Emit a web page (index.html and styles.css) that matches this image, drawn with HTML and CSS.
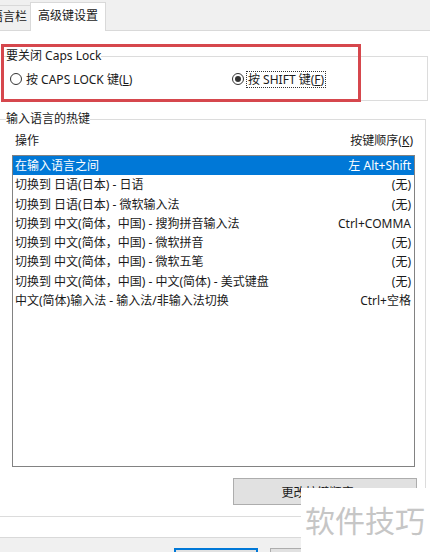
FILE: index.html
```html
<!DOCTYPE html>
<html lang="zh-CN">
<head>
  <meta charset="UTF-8" />
  <meta name="viewport" content="width=device-width, initial-scale=1.0"/>
  <title>文本服务和输入语言 - 高级键设置</title>
  <link rel="stylesheet" href="styles.css">
</head>
<body>
  <div class="tabs">
    <div class="tab tab-cut">语言栏</div>
    <div class="tab active">高级键设置</div>
  </div>

  <div class="panel">
    <fieldset class="group caps">
      <legend>要关闭 Caps Lock</legend>
      <div class="radios">
        <label class="radio"><span class="dot"></span><span>按 CAPS LOCK 键(<u>L</u>)</span></label>
        <label class="radio checked"><span class="dot"></span><span class="focus">按 SHIFT 键(<u>F</u>)</span></label>
      </div>
    </fieldset>

    <fieldset class="group hotkeys">
      <legend>输入语言的热键</legend>
      <div class="hk-body">
        <div class="hk-head">
          <span>操作</span>
          <span>按键顺序(<u>K</u>)</span>
        </div>
        <div class="list">
          <div class="row selected"><span>在输入语言之间</span><span>左 Alt+Shift</span></div>
          <div class="row"><span>切换到 日语(日本) - 日语</span><span>(无)</span></div>
          <div class="row"><span>切换到 日语(日本) - 微软输入法</span><span>(无)</span></div>
          <div class="row"><span>切换到 中文(简体，中国) - 搜狗拼音输入法</span><span>Ctrl+COMMA</span></div>
          <div class="row"><span>切换到 中文(简体，中国) - 微软拼音</span><span>(无)</span></div>
          <div class="row"><span>切换到 中文(简体，中国) - 微软五笔</span><span>(无)</span></div>
          <div class="row"><span>切换到 中文(简体，中国) - 中文(简体) - 美式键盘</span><span>(无)</span></div>
          <div class="row"><span>中文(简体)输入法 - 输入法/非输入法切换</span><span>Ctrl+空格</span></div>
        </div>
        <div class="actions">
          <button class="btn">更改按键顺序(<u>C</u>)</button>
        </div>
      </div>
    </fieldset>
  </div>

  <div class="footer">
    <button class="btn default">确定</button>
    <button class="btn">取消</button>
  </div>

  <!-- annotation + watermark from the screenshot -->
  <div class="highlight"></div>
  <div class="watermark">软件技巧</div>
</body>
</html>
```

FILE: styles.css
```css
body {
  margin: 0;
  width: 430px;
  height: 552px;
  overflow: hidden;
  position: relative;
  background: #f0f0f0;
  color: #1a1a1a;
  font-family: "Noto Sans", "Noto Sans CJK SC", sans-serif;
  font-size: 12px;
}

u { text-decoration: underline; text-underline-offset: 1px; }

/* tab strip */
.tabs {
  height: 30px;
  display: flex;
  align-items: flex-end;
}
.tab {
  box-sizing: border-box;
  height: 25px;
  line-height: 22px;
  padding: 0 7px;
  border: 1px solid #d9d9d9;
  border-bottom: none;
  background: #f0f0f0;
  white-space: nowrap;
  overflow: hidden;
}
.tab-cut {
  margin-left: -17px;
  width: 48px;
}
.tab.active {
  height: 29px;
  line-height: 26px;
  width: 76px;
  margin-left: -1px;
  margin-bottom: -1px;
  background: #fff;
  position: relative;
  z-index: 1;
}

/* white page */
.panel {
  background: #fff;
  border-top: 1px solid #d9d9d9;
  border-bottom: 1px solid #d9d9d9;
  padding: 17px 0 20px;
}

.group {
  margin: 0;
  padding: 0;
  border: 1px solid #dcdcdc;
  min-width: 0;
}
.group legend {
  padding: 0;
  line-height: 16px;
}

.caps {
  margin: 0 2px 0 3px;
  padding: 0 0 6px 2px;
}
.radios {
  height: 30px;
  display: grid;
  grid-template-columns: 222px 1fr;
  align-items: center;
  padding-left: 4px;
}
.radio {
  display: flex;
  align-items: center;
  gap: 4px;
}
.dot {
  width: 12px;
  height: 12px;
  box-sizing: border-box;
  border: 1px solid #333;
  border-radius: 50%;
  display: flex;
  align-items: center;
  justify-content: center;
}
.checked .dot::after {
  content: "";
  width: 6px;
  height: 6px;
  border-radius: 50%;
  background: #333;
}
.focus {
  outline: 1px dotted #333;
  outline-offset: 0;
  line-height: 15px;
  padding: 0 1px;
  margin-left: -1px;
}

.hotkeys {
  margin: 10px 4px 0 -2px;
}
.hotkeys legend {
  margin-left: 7px;
}
.hk-body {
  padding: 0 10px 11px 13px;
}
.hk-head {
  display: flex;
  justify-content: space-between;
  height: 20px;
  line-height: 20px;
  margin-top: 4px;
  padding: 0 2px 0 3px;
}
.list {
  margin-top: 4px;
  height: 310px;
  border: 1px solid #828282;
  background: #fff;
}
.row {
  display: flex;
  justify-content: space-between;
  height: 19.3px;
  line-height: 19px;
  padding: 0 3px 0 2px;
  white-space: nowrap;
}
.row.selected {
  background: #0078d7;
  color: #fff;
}

.actions {
  display: flex;
  justify-content: flex-end;
  margin: 11px -2px 0 0;
}
.btn {
  font: inherit;
  color: inherit;
  background: #e1e1e1;
  border: 1px solid #adadad;
  height: 27px;
  width: 184px;
  padding: 0;
}

.footer {
  display: flex;
  gap: 12px;
  padding: 10px 0 0 174px;
}
.footer .btn {
  width: 84px;
  height: 23px;
}
.footer .btn.default {
  border: 2px solid #0078d7;
}

/* overlays */
.highlight {
  position: absolute;
  left: 1px;
  top: 44px;
  width: 354px;
  height: 52px;
  border: 3px solid #d6474d;
}
.watermark {
  position: absolute;
  left: 301px;
  top: 488px;
  right: 0;
  bottom: 0;
  background: #fff;
  color: #c6c6c6;
  font-family: "Noto Sans CJK SC", sans-serif;
  font-size: 30px;
  line-height: 34px;
  padding: 14px 0 0 4px;
  white-space: nowrap;
}
```
